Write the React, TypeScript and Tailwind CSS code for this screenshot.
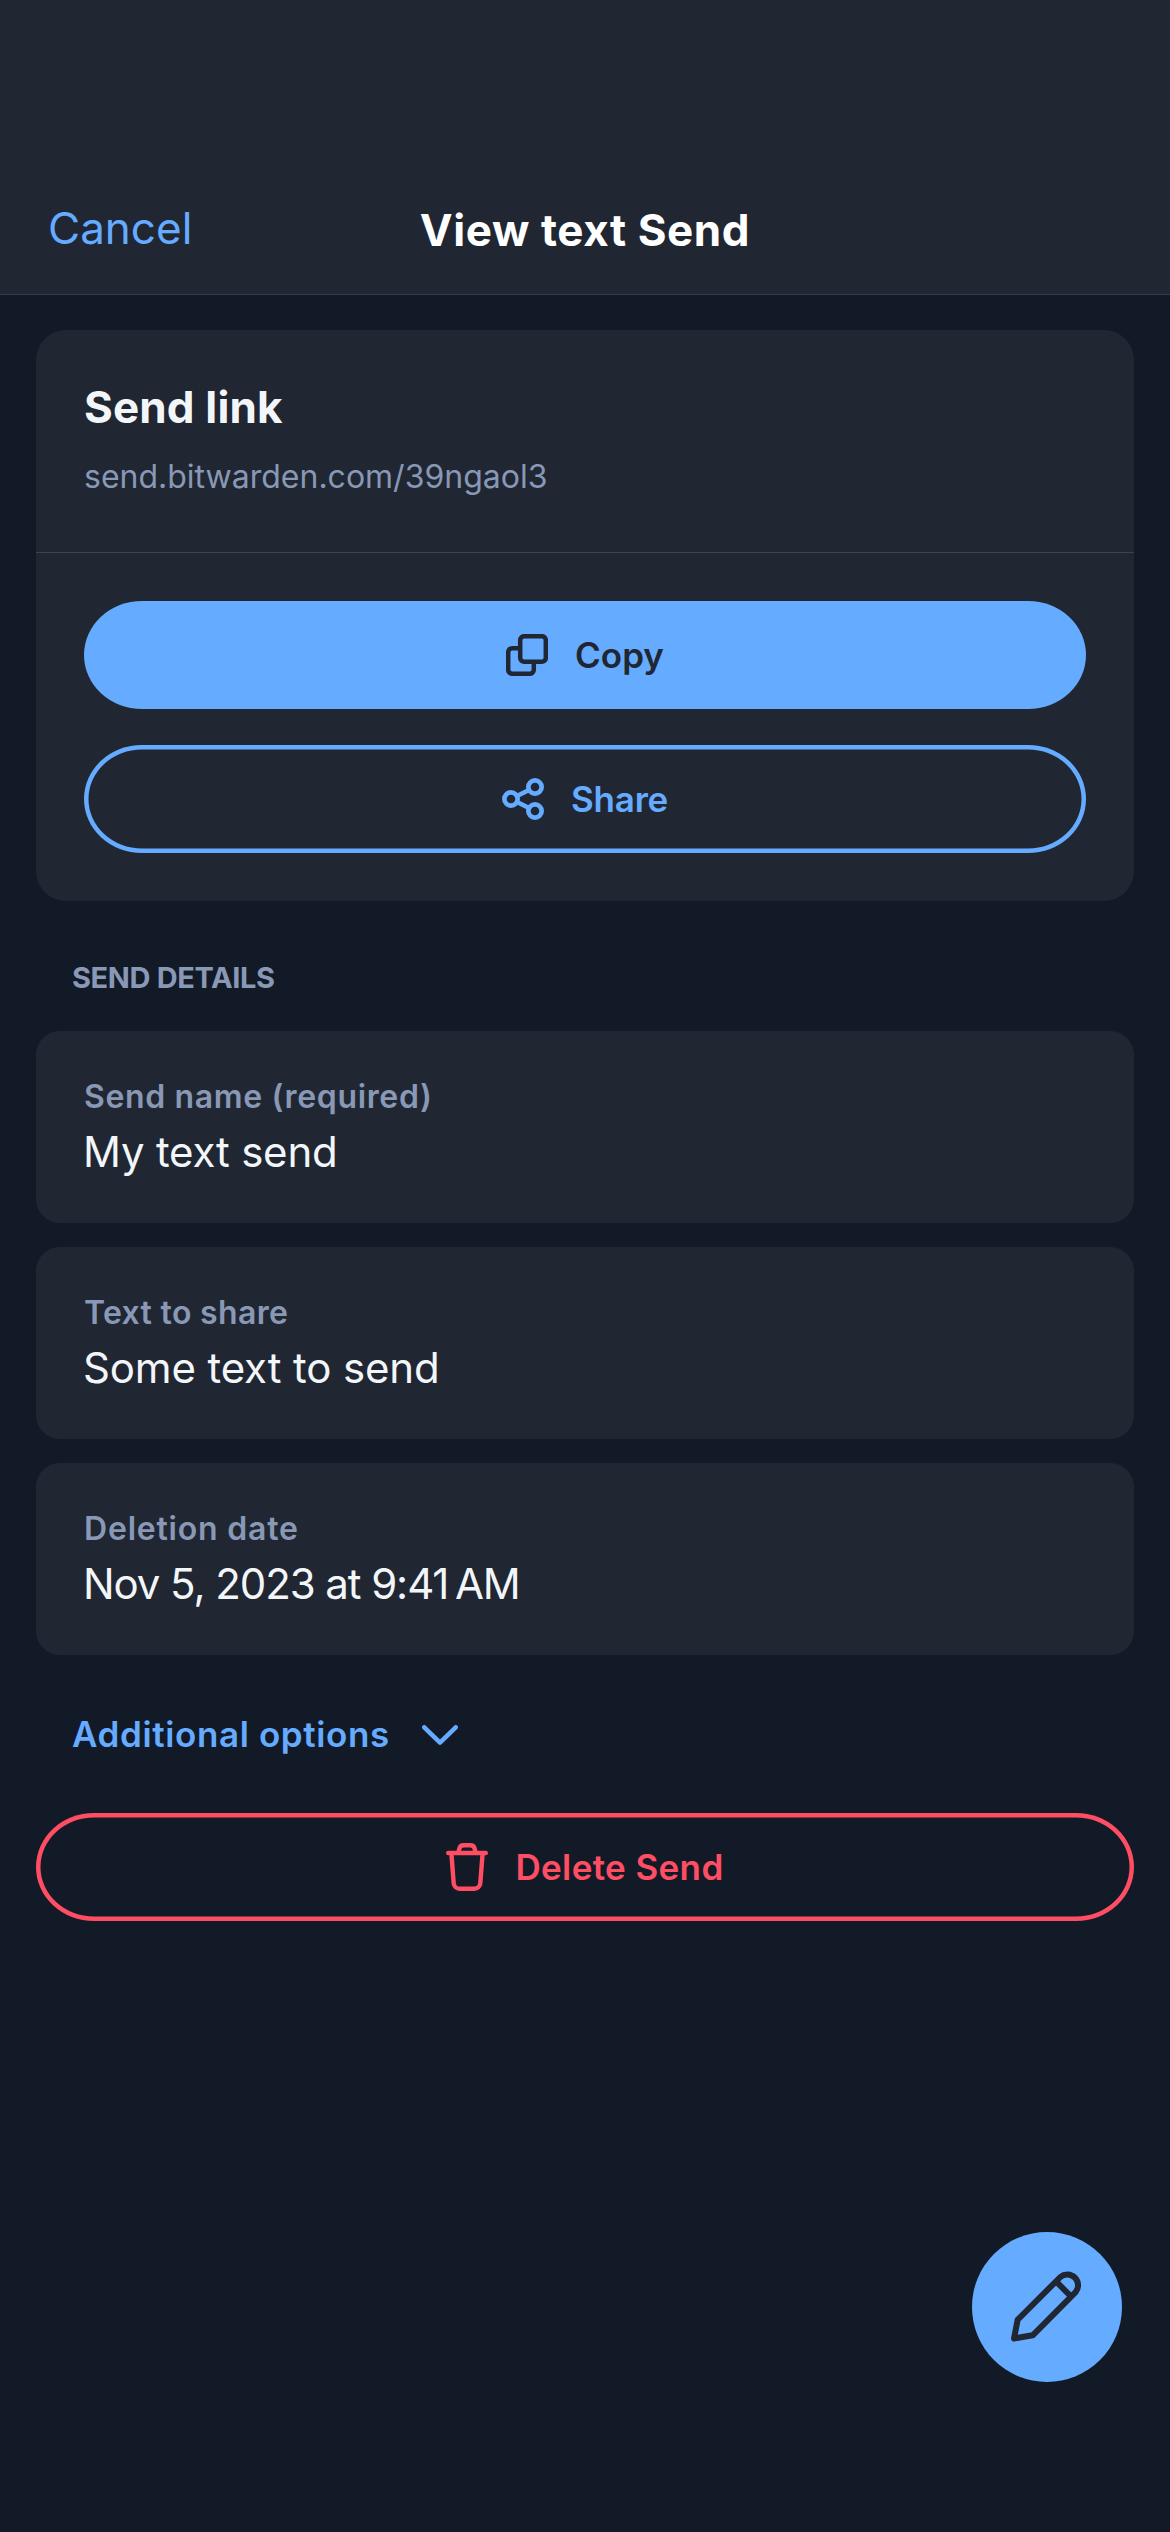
import React from "react";

function CopyIcon() {
  return (
    <svg className="h-[42px] w-[42px]" viewBox="0 0 42 42" fill="none" stroke="currentColor" strokeWidth="4.5">
      <rect x="14.2" y="2.2" width="25.6" height="25.6" rx="4" />
      <path d="M14 14.2H6.2a4 4 0 0 0-4 4v17.6a4 4 0 0 0 4 4h17.6a4 4 0 0 0 4-4v-8" />
    </svg>
  );
}

function ShareIcon() {
  return (
    <svg className="h-[42px] w-[42px]" viewBox="0 0 42 42" fill="none" stroke="currentColor" strokeWidth="4.7">
      <circle cx="9" cy="21" r="6.65" />
      <circle cx="33" cy="9" r="6.65" />
      <circle cx="33" cy="33" r="6.65" />
      <path d="M15 18l12-6M15 24l12 6" />
    </svg>
  );
}

function TrashIcon() {
  return (
    <svg
      className="h-12 w-[42px]"
      viewBox="0 0 42 48"
      fill="none"
      stroke="currentColor"
      strokeWidth="4.4"
      strokeLinecap="round"
      strokeLinejoin="round"
    >
      <path d="M2.2 10h37.6" />
      <path d="M12.5 9.5l.8-3.8a4.4 4.4 0 0 1 4.3-3.5h6.8a4.4 4.4 0 0 1 4.3 3.5l.8 3.8" />
      <path d="M5.4 10.5l2.3 29.8a6 6 0 0 0 6 5.5h14.6a6 6 0 0 0 6-5.5l2.3-29.8" />
    </svg>
  );
}

function ChevronIcon() {
  return (
    <svg
      className="mt-[2px] h-5 w-9"
      viewBox="0 0 36 20"
      fill="none"
      stroke="currentColor"
      strokeWidth="4.5"
      strokeLinecap="round"
      strokeLinejoin="round"
    >
      <path d="M2.3 2.3L18 17.6 33.7 2.3" />
    </svg>
  );
}

function PencilIcon() {
  return (
    <svg
      className="h-[150px] w-[150px]"
      viewBox="0 0 150 150"
      fill="none"
      stroke="currentColor"
      strokeWidth="6"
      strokeLinejoin="round"
    >
      <path d="M42 106.5L45.7 87.7 88.4 45A10.8 10.8 0 0 1 103.6 60.2L60.7 103.3Z" />
      <path d="M84 49.4l15.2 15.2" />
    </svg>
  );
}

function Field({ label, value, labelClass, valueClass }: { label: string; value: string; labelClass: string; valueClass: string }) {
  return (
    <div className="h-[192px] rounded-3xl bg-[#202733] px-12 pt-[46px]">
      <div className={`text-[32px] leading-10 font-semibold whitespace-nowrap text-[#8898b5] ${labelClass}`}>{label}</div>
      <div className={`mt-[7px] -ml-px text-[42px] leading-[56px] whitespace-nowrap text-[#f3f6f9] ${valueClass}`}>{value}</div>
    </div>
  );
}

export default function App() {
  return (
    <div className="relative h-[2532px] w-[1170px] overflow-hidden bg-[#121a27] font-['Inter',sans-serif]">
      <header className="grid h-[295px] grid-cols-[1fr_auto_1fr] items-start border-b border-[#353b47] bg-[#202733] pt-[198px]">
        <button className="justify-self-start pl-12 text-[44px] leading-[60px] text-[#65abff]">Cancel</button>
        <h1 className="mt-[2px] text-[44px] leading-[60px] font-bold tracking-[0.59px] text-white">View text Send</h1>
        <span />
      </header>

      <main className="px-9 pt-[35px]">
        <section className="rounded-[30px] bg-[#202733] pb-12">
          <div className="h-[223px] border-b border-[#3d434f] px-12 pt-[47px]">
            <h2 className="text-[44px] leading-[60px] font-bold tracking-[0.15px] text-[#f3f6f9]">Send link</h2>
            <p className="mt-4 text-[32px] leading-[48px] text-[#8898b5]">send.bitwarden.com/39ngaol3</p>
          </div>
          <div className="flex flex-col gap-9 px-12 pt-12">
            <button className="flex h-[108px] items-center justify-center gap-[27px] rounded-[58px/54px] bg-[#65abff] text-[35px] font-semibold text-[#202733]">
              <CopyIcon />
              Copy
            </button>
            <button className="flex h-[108px] items-center justify-center gap-[27px] rounded-[58px/54px] text-[35px] font-semibold tracking-[-0.2px] text-[#65abff] shadow-[inset_0_0_0_4.5px_#65abff]">
              <ShareIcon />
              Share
            </button>
          </div>
        </section>

        <h3 className="mt-[57px] pl-9 text-[29px] leading-10 font-bold tracking-[-0.37px] text-[#8898b5]">SEND DETAILS</h3>

        <section className="mt-[33px] flex flex-col gap-6">
          <Field label="Send name (required)" value="My text send" labelClass="tracking-[0.65px]" valueClass="tracking-[-0.2px]" />
          <Field label="Text to share" value="Some text to send" labelClass="tracking-[0.33px]" valueClass="tracking-[-0.14px]" />
          <Field label="Deletion date" value={"Nov 5, 2023 at 9:41\u2009AM"} labelClass="tracking-[0.8px]" valueClass="tracking-[-1.08px]" />
        </section>

        <button className="mt-[55px] flex h-12 items-center gap-8 pl-9 text-[35px] leading-[48px] font-semibold tracking-[0.62px] text-[#65abff]">
          Additional options
          <ChevronIcon />
        </button>

        <button className="mt-[55px] flex h-[108px] w-full items-center justify-center gap-[27px] rounded-[58px/54px] text-[35px] font-semibold tracking-[0.38px] text-[#ff4e63] shadow-[inset_0_0_0_4.5px_#ff4e63]">
          <TrashIcon />
          Delete Send
        </button>
      </main>

      <button className="absolute right-12 bottom-[150px] h-[150px] w-[150px] rounded-full bg-[#65abff] text-[#202733]">
        <PencilIcon />
      </button>
    </div>
  );
}
